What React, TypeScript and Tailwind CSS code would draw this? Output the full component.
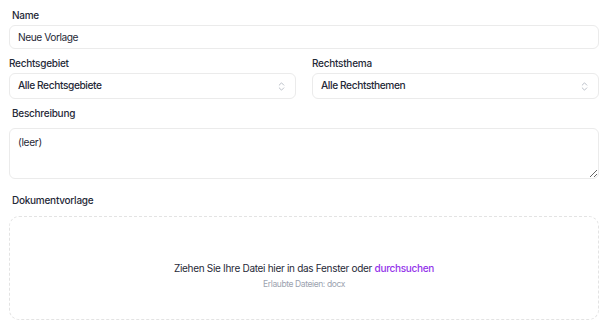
import React from 'react';
import { ChevronsUpDown } from 'lucide-react';

const SelectBox: React.FC<{ label: string; value: string }> = ({ label, value }) => (
  <div className="flex-1 flex flex-col">
    <label className="text-[10px] leading-[14px] font-medium tracking-[-0.25px] text-[#1f2937] mb-[3px]">{label}</label>
    <div className="h-[26px] flex items-center justify-between pl-[8px] pr-[8px] border border-[#ebebeb] rounded-[6px] bg-white">
      <span className="text-[10.2px] font-medium tracking-[-0.4px] text-[#1f2937]">{value}</span>
      <ChevronsUpDown size={11} strokeWidth={1.5} className="text-[#9ca3af]" />
    </div>
  </div>
);

const App: React.FC = () => {
  return (
    <div className="w-[607px] h-[325px] bg-white pl-[9px] pr-[8px] pt-[8px] font-['Inter',sans-serif] text-[#1f2937]">
      {/* Name */}
      <div className="flex flex-col">
        <label className="text-[10px] leading-[14px] font-medium tracking-[-0.25px] pl-[3px] mb-[3px]">Name</label>
        <input
          defaultValue="Neue Vorlage"
          className="h-[24px] px-[8px] border border-[#ebebeb] rounded-[6px] text-[10.2px] tracking-[-0.45px] text-[#1f2937] outline-none"
        />
      </div>

      {/* Rechtsgebiet / Rechtsthema */}
      <div className="flex gap-[16px] mt-[7px]">
        <SelectBox label="Rechtsgebiet" value="Alle Rechtsgebiete" />
        <SelectBox label="Rechtsthema" value="Alle Rechtsthemen" />
      </div>

      {/* Beschreibung */}
      <div className="flex flex-col mt-[7px]">
        <label className="text-[10px] leading-[14px] font-medium tracking-[-0.25px] pl-[3px] mb-[8px]">Beschreibung</label>
        <textarea
          defaultValue="(leer)"
          className="h-[51px] px-[8px] py-[6px] border border-[#ebebeb] rounded-[6px] text-[10.2px] leading-[14px] tracking-[-0.3px] text-[#1f2937] outline-none"
        />
      </div>

      {/* Dokumentvorlage */}
      <div className="flex flex-col mt-[14px]">
        <label className="text-[10px] leading-[14px] font-medium tracking-[-0.25px] pl-[3px] mb-[9px]">Dokumentvorlage</label>
        <div className="h-[104px] border border-dashed border-[#e3e3e3] rounded-[10px] flex flex-col items-center justify-center pt-[14px]">
          <p className="text-[10px] leading-[14px] tracking-[-0.3px] text-[#1f2937]">
            Ziehen Sie Ihre Datei hier in das Fenster oder{' '}
            <span className="text-[#9333ea] font-medium">durchsuchen</span>
          </p>
          <p className="text-[8.5px] leading-[12px] tracking-[-0.4px] text-[#9ca3af] mt-[3px]">Erlaubte Dateien: docx</p>
        </div>
      </div>
    </div>
  );
};

export default App;
